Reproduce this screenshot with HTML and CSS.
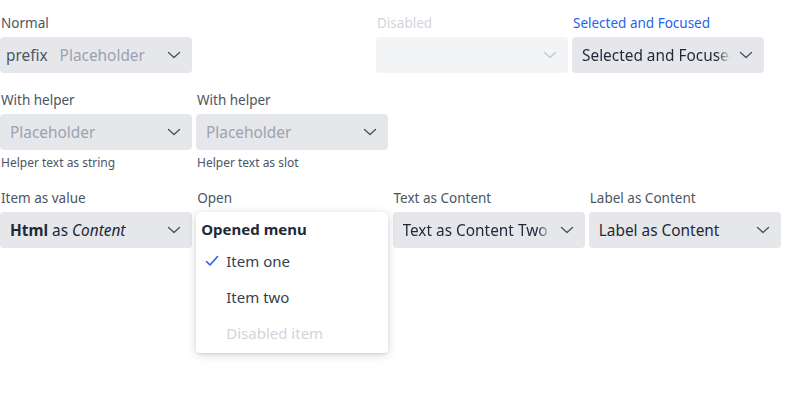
FILE: index.html
```html
<!DOCTYPE html>
<html>
<head>
<meta charset="utf-8">
<link rel="stylesheet" href="styles.css">
</head>
<body>
<div class="page">
  <div class="row">
    <div class="field">
      <div class="label">Normal</div>
      <div class="box">
        <span class="prefix">prefix</span>
        <span class="value placeholder">Placeholder</span>
        <svg class="chev" width="14" height="8" viewBox="0 0 14 8"><path d="M1.5 1.5 L7 6.5 L12.5 1.5" fill="none" stroke="#4b5563" stroke-width="1.4" stroke-linecap="round" stroke-linejoin="round"/></svg>
      </div>
    </div>
    <div class="spacer"></div>
    <div class="field">
      <div class="label disabled">Disabled</div>
      <div class="box box-disabled">
        <span class="value"></span>
        <svg class="chev" width="14" height="8" viewBox="0 0 14 8"><path d="M1.5 1.5 L7 6.5 L12.5 1.5" fill="none" stroke="#c4c8cf" stroke-width="1.4" stroke-linecap="round" stroke-linejoin="round"/></svg>
      </div>
    </div>
    <div class="field">
      <div class="label focused">Selected and Focused</div>
      <div class="box">
        <span class="value fade">Selected and Focused</span>
        <svg class="chev" width="14" height="8" viewBox="0 0 14 8"><path d="M1.5 1.5 L7 6.5 L12.5 1.5" fill="none" stroke="#4b5563" stroke-width="1.4" stroke-linecap="round" stroke-linejoin="round"/></svg>
      </div>
    </div>
  </div>

  <div class="row">
    <div class="field">
      <div class="label">With helper</div>
      <div class="box">
        <span class="value placeholder">Placeholder</span>
        <svg class="chev" width="14" height="8" viewBox="0 0 14 8"><path d="M1.5 1.5 L7 6.5 L12.5 1.5" fill="none" stroke="#4b5563" stroke-width="1.4" stroke-linecap="round" stroke-linejoin="round"/></svg>
      </div>
      <div class="helper">Helper text as string</div>
    </div>
    <div class="field">
      <div class="label">With helper</div>
      <div class="box">
        <span class="value placeholder">Placeholder</span>
        <svg class="chev" width="14" height="8" viewBox="0 0 14 8"><path d="M1.5 1.5 L7 6.5 L12.5 1.5" fill="none" stroke="#4b5563" stroke-width="1.4" stroke-linecap="round" stroke-linejoin="round"/></svg>
      </div>
      <div class="helper">Helper text as slot</div>
    </div>
  </div>

  <div class="row">
    <div class="field">
      <div class="label">Item as value</div>
      <div class="box">
        <span class="value"><b>Html</b> as <i>Content</i></span>
        <svg class="chev" width="14" height="8" viewBox="0 0 14 8"><path d="M1.5 1.5 L7 6.5 L12.5 1.5" fill="none" stroke="#4b5563" stroke-width="1.4" stroke-linecap="round" stroke-linejoin="round"/></svg>
      </div>
    </div>
    <div class="field open">
      <div class="label">Open</div>
      <div class="box">
        <span class="value"></span>
      </div>
      <div class="menu">
        <div class="menu-title">Opened menu</div>
        <div class="menu-item selected">
          <svg class="check" width="14" height="12" viewBox="0 0 14 12"><path d="M1.5 6.5 L5 10 L12.5 1.5" fill="none" stroke="#2563eb" stroke-width="1.6" stroke-linecap="round" stroke-linejoin="round"/></svg>
          <span>Item one</span>
        </div>
        <div class="menu-item"><span>Item two</span></div>
        <div class="menu-item item-disabled"><span>Disabled item</span></div>
      </div>
    </div>
    <div class="field">
      <div class="label">Text as Content</div>
      <div class="box">
        <span class="value fade">Text as Content Two</span>
        <svg class="chev" width="14" height="8" viewBox="0 0 14 8"><path d="M1.5 1.5 L7 6.5 L12.5 1.5" fill="none" stroke="#4b5563" stroke-width="1.4" stroke-linecap="round" stroke-linejoin="round"/></svg>
      </div>
    </div>
    <div class="field">
      <div class="label">Label as Content</div>
      <div class="box">
        <span class="value">Label as Content</span>
        <svg class="chev" width="14" height="8" viewBox="0 0 14 8"><path d="M1.5 1.5 L7 6.5 L12.5 1.5" fill="none" stroke="#4b5563" stroke-width="1.4" stroke-linecap="round" stroke-linejoin="round"/></svg>
      </div>
    </div>
  </div>
</div>
</body>
</html>
```

FILE: styles.css
```css
* { box-sizing: border-box; }
html, body {
  margin: 0;
  padding: 0;
  background: #ffffff;
  font-family: "Noto Sans", "Open Sans", sans-serif;
  color: #1f2937;
}
body { min-height: 400px; }
.page {
  padding-top: 13px;
  min-height: 400px;
  display: flex;
  flex-direction: column;
  gap: 17px;
}
.row {
  display: flex;
  gap: 4px;
  align-items: flex-start;
}
.row:last-child { gap: 4.25px; }
.spacer { width: 176px; flex: none; }
.field {
  width: 192px;
  flex: none;
  display: flex;
  flex-direction: column;
  position: relative;
}
.field.open { z-index: 5; }
.label {
  font-size: 13.5px;
  line-height: 20px;
  height: 20px;
  color: #4b5563;
  padding-left: 1px;
  margin-bottom: 4px;
  white-space: nowrap;
}
.label.disabled { color: #d1d5db; }
.label.focused { color: #2563eb; }
.box {
  height: 36px;
  background: #e5e7eb;
  border-radius: 4px;
  display: flex;
  align-items: center;
  padding: 0 11px 0 10px;
  font-size: 15.4px;
  color: #1f2937;
}
.box-disabled { background: #f3f4f6; }
.prefix {
  color: #4b5563;
  margin-left: -4px;
  margin-right: 12px;
  flex: none;
}
.value {
  flex: 1;
  min-width: 0;
  white-space: nowrap;
  overflow: hidden;
}
.value b { font-weight: 700; }
.placeholder { color: #9ca3af; }
.fade {
  -webkit-mask-image: linear-gradient(to right, #000 calc(100% - 14px), transparent);
  mask-image: linear-gradient(to right, #000 calc(100% - 14px), transparent);
}
.chev {
  flex: none;
  margin-left: 8px;
}
.helper {
  font-size: 12px;
  line-height: 16px;
  margin-top: 5px;
  color: #4b5563;
  padding-left: 1px;
}
.menu {
  position: absolute;
  top: 24px;
  left: 0;
  width: 192px;
  background: #ffffff;
  border-radius: 4px;
  box-shadow: 0 2px 10px rgba(15, 23, 42, 0.18), 0 1px 2px rgba(15, 23, 42, 0.08);
  padding: 4px 0 2px;
}
.menu-title {
  height: 27px;
  line-height: 27px;
  padding-left: 5px;
  font-size: 15px;
  font-weight: 700;
  color: #1f2937;
}
.menu-item {
  height: 36px;
  display: flex;
  align-items: center;
  padding-left: 30px;
  font-size: 15px;
  color: #374151;
  position: relative;
}
.menu-item .check {
  position: absolute;
  left: 9px;
  top: 12px;
}
.item-disabled { color: #d1d5db; }
```
